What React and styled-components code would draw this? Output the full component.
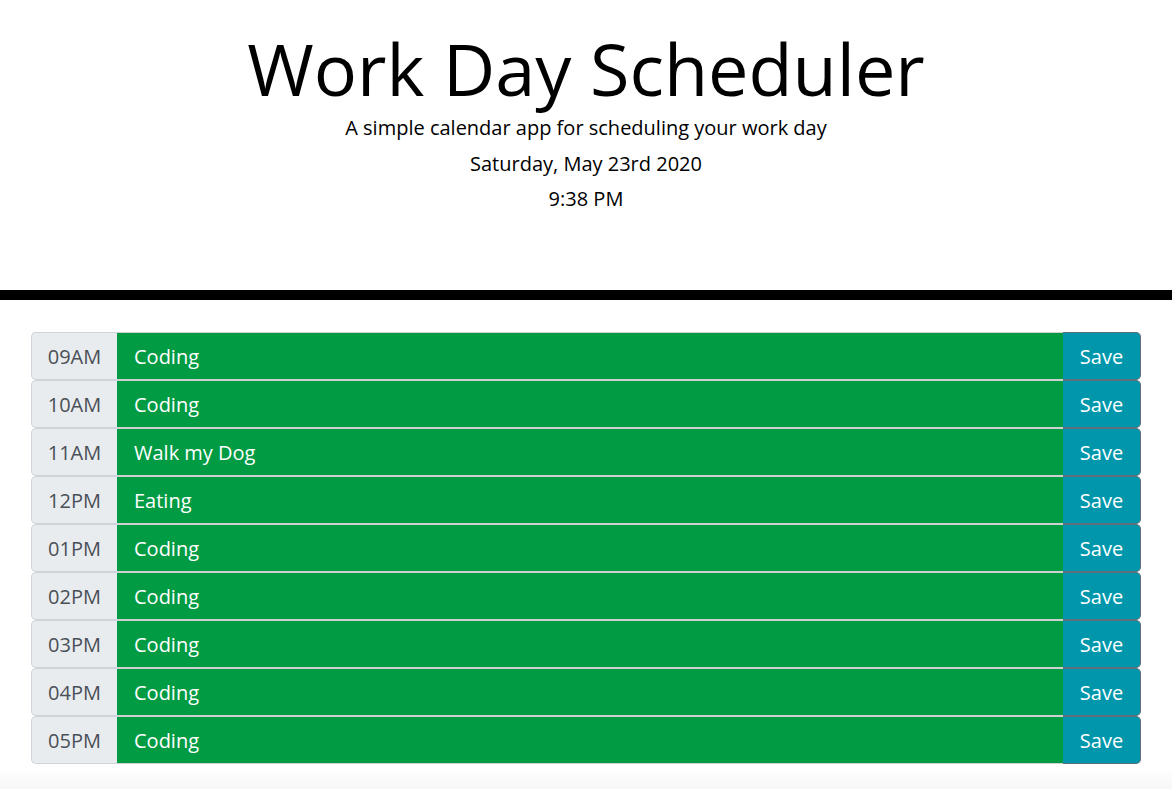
import React, { useState } from "react";
import styled, { createGlobalStyle } from "styled-components";

const GlobalStyle = createGlobalStyle`
  body {
    margin: 0;
    background: #fff;
    font-family: "Open Sans", "Liberation Sans", sans-serif;
    color: #000;
  }
`;

const Page = styled.div`
  min-height: 789px;
  display: flex;
  flex-direction: column;
`;

const Jumbotron = styled.header`
  box-sizing: content-box;
  height: 264px;
  padding-top: 26px;
  border-bottom: 10px solid #000;
  text-align: center;
`;

const Title = styled.h1`
  margin: 0;
  font-size: 72px;
  font-weight: 400;
  line-height: 84px;
`;

const Lead = styled.p`
  margin: 0;
  font-size: 20px;
  line-height: 35.5px;
`;

const Container = styled.main`
  width: 1110px;
  margin: 32px auto 0;
  display: flex;
  flex-direction: column;
`;

const Row = styled.div`
  display: flex;
  height: 48px;
`;

const Hour = styled.div`
  width: 86px;
  box-sizing: border-box;
  border: 1px solid #ced4da;
  border-right: none;
  border-radius: 5px 0 0 5px;
  background: #e9ecef;
  color: #495057;
  font-size: 20px;
  display: flex;
  align-items: center;
  justify-content: center;
`;

const Task = styled.input`
  flex: 1;
  min-width: 0;
  box-sizing: border-box;
  height: 48px;
  margin: 0;
  border: none;
  border-top: 1px solid #d0d0d0;
  border-bottom: 1px solid #d0d0d0;
  background: ${(p) => p.color};
  color: #fff;
  font-family: inherit;
  font-size: 20px;
  padding: 0 17px;
  outline: none;
`;

const SaveButton = styled.button`
  width: 78px;
  box-sizing: border-box;
  height: 48px;
  margin: 0;
  border: 1px solid #5f6f78;
  border-left: none;
  border-radius: 0 5px 5px 0;
  background: #0097ac;
  color: #fff;
  font-family: inherit;
  font-size: 20px;
  cursor: pointer;
  padding: 0;
`;

const Footer = styled.div`
  flex: 1;
  margin-top: 8px;
  background: linear-gradient(#fdfdfd, #f7f7f7);
`;

const hours = [
  ["09AM", "Coding"],
  ["10AM", "Coding"],
  ["11AM", "Walk my Dog"],
  ["12PM", "Eating"],
  ["01PM", "Coding"],
  ["02PM", "Coding"],
  ["03PM", "Coding"],
  ["04PM", "Coding"],
  ["05PM", "Coding"],
];

const App = () => {
  const [tasks, setTasks] = useState(hours.map((h) => h[1]));

  const changeTask = (i, value) => {
    const next = [...tasks];
    next[i] = value;
    setTasks(next);
  };

  return (
    <Page>
      <GlobalStyle />
      <Jumbotron>
        <Title>Work Day Scheduler</Title>
        <Lead>A simple calendar app for scheduling your work day</Lead>
        <Lead>Saturday, May 23rd 2020</Lead>
        <Lead>9:38 PM</Lead>
      </Jumbotron>
      <Container>
        {hours.map(([hour], i) => (
          <Row key={hour}>
            <Hour>{hour}</Hour>
            <Task color="#009b43" value={tasks[i]} onChange={(e) => changeTask(i, e.target.value)} />
            <SaveButton>Save</SaveButton>
          </Row>
        ))}
      </Container>
      <Footer />
    </Page>
  );
};

export default App;
